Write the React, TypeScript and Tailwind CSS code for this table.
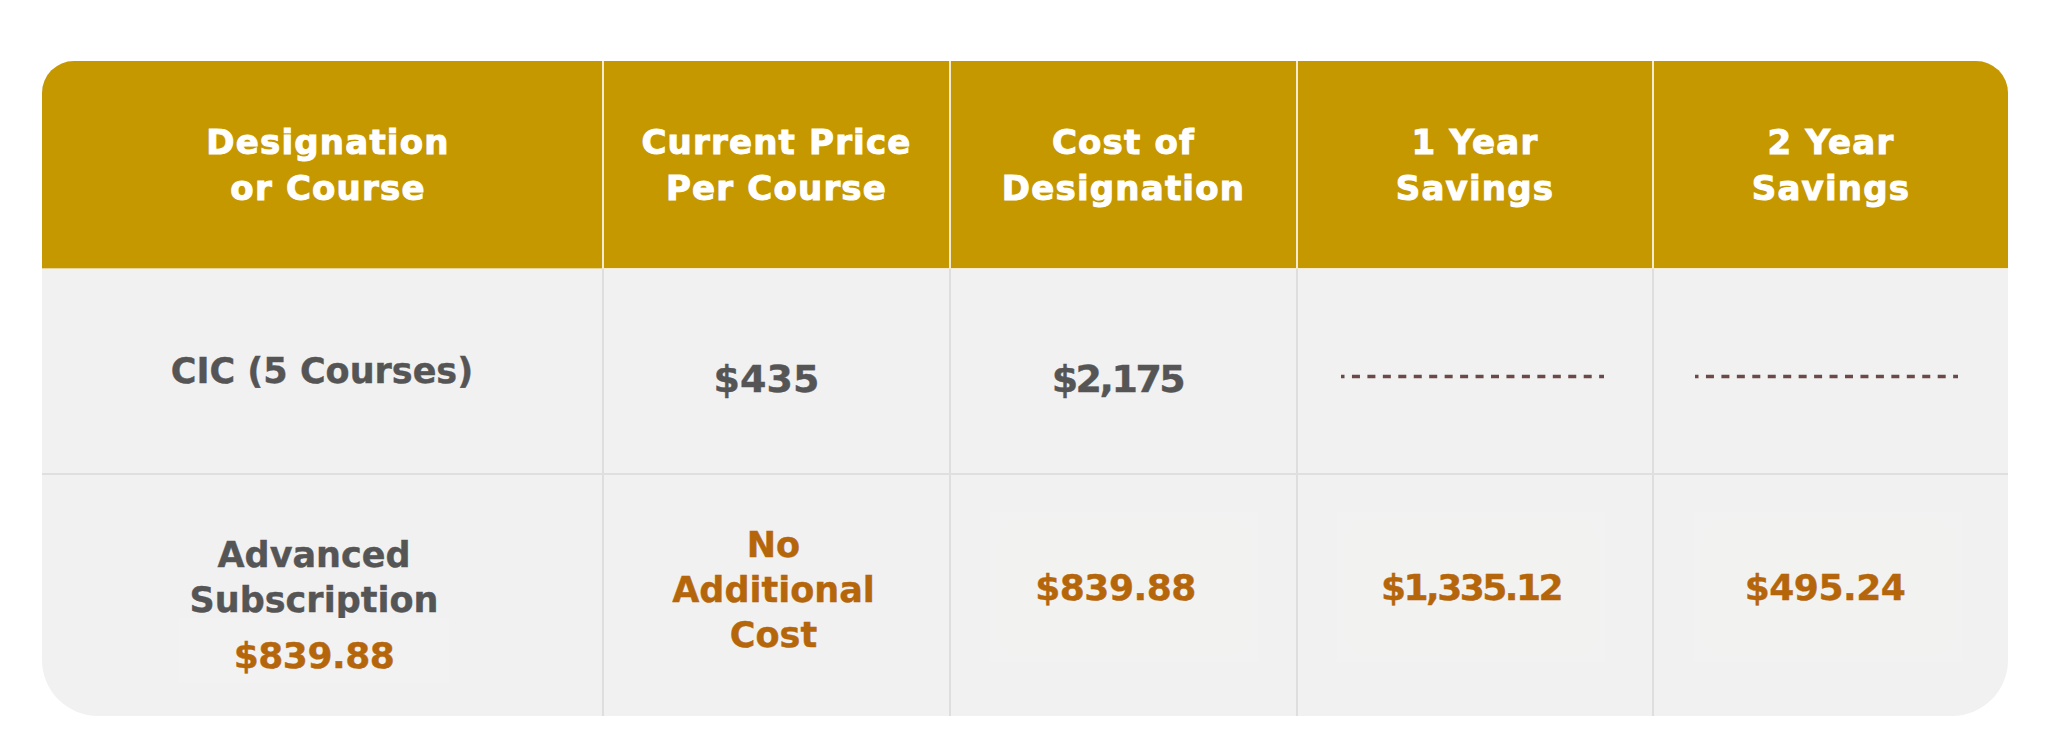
import React from "react";

const font = "font-['DejaVu_Sans',_'Liberation_Sans',sans-serif]";

function Dashes() {
  return (
    <svg width="263" height="5" viewBox="0 0 263 5" className="block">
      <line
        x1="0"
        y1="2.5"
        x2="263"
        y2="2.5"
        stroke="#6b4949"
        strokeWidth="3.6"
        strokeDasharray="8 7.45"
        strokeDashoffset="4.5"
      />
    </svg>
  );
}

function ValueBox({ children }: { children: React.ReactNode }) {
  return (
    <div className="w-[268px] h-[150px] bg-[#f2f2f2] p-[6px]">
      <div className="w-full h-full rounded-[28px] bg-[#f2f2f1] flex items-center justify-center text-[36px] leading-[45px] font-bold text-[#b5660b] tracking-[-0.5px] [-webkit-text-stroke:0.4px_#b5660b]">
        {children}
      </div>
    </div>
  );
}

export default function App() {
  const head =
    "bg-[#c69800] text-white text-[34px] leading-[46px] font-bold tracking-[1.2px] [-webkit-text-stroke:1px_white] flex items-center justify-center text-center border-b border-[#e6d49a]";
  const headDiv = "border-l-2 border-[#f4ead0]";
  const cell = "border-l-2 border-[#dedede]";
  const grey = "text-[#555556] [-webkit-text-stroke:0.4px_#555556]";
  return (
    <div className={`w-[2048px] min-h-[756px] bg-white pt-[61px] pl-[42px] ${font}`}>
      <div className="w-[1966px] h-[655px] rounded-tl-[32px] rounded-tr-[32px] rounded-bl-[56px] rounded-br-[56px] overflow-hidden bg-[#f1f1f1] grid grid-cols-[560px_347px_347px_356px_356px] grid-rows-[208px_206px_241px]">
        {/* Header */}
        <div className={`${head} pl-[12px]`}>
          <div>
            Designation
            <br />
            or Course
          </div>
        </div>
        <div className={`${head} ${headDiv}`}>
          <div>
            Current Price
            <br />
            Per Course
          </div>
        </div>
        <div className={`${head} ${headDiv}`}>
          <div>
            Cost of
            <br />
            Designation
          </div>
        </div>
        <div className={`${head} ${headDiv}`}>
          <div>
            1 Year
            <br />
            Savings
          </div>
        </div>
        <div className={`${head} ${headDiv}`}>
          <div>
            2 Year
            <br />
            Savings
          </div>
        </div>

        {/* Row 1 */}
        <div className={`border-b-2 border-[#dfdfdf] flex items-center justify-center text-[35px] leading-[45px] font-bold ${grey}`}>
          CIC (5 Courses)
        </div>
        <div className={`${cell} border-b-2 border-b-[#dfdfdf] flex items-center justify-center pt-[16px] pr-[20px] text-[38px] leading-[45px] font-bold ${grey}`}>
          $435
        </div>
        <div className={`${cell} border-b-2 border-b-[#dfdfdf] flex items-center justify-center pt-[16px] pr-[12px] text-[38px] leading-[45px] font-bold tracking-[-2.5px] ${grey}`}>
          $2,175
        </div>
        <div className={`${cell} border-b-2 border-b-[#dfdfdf] flex items-center justify-center pt-[10px] pr-[6px]`}>
          <Dashes />
        </div>
        <div className={`${cell} border-b-2 border-b-[#dfdfdf] flex items-center justify-center pt-[10px] pr-[10px]`}>
          <Dashes />
        </div>

        {/* Row 2 */}
        <div className="flex flex-col items-center pt-[58px] pr-[16px] text-[35px] leading-[45px] font-bold">
          <div className={grey}>Advanced</div>
          <div className={grey}>Subscription</div>
          <div className="mt-[-5px] w-[270px] h-[65px] bg-[#f2f2f2] flex justify-center pt-[15px]">
            <div className="text-[36px] leading-[45px] text-[#b5660b] tracking-[-0.5px] [-webkit-text-stroke:0.4px_#b5660b]">$839.88</div>
          </div>
        </div>
        <div className={`${cell} flex flex-col items-center pt-[48px] pr-[6px] text-[35px] leading-[45px] font-bold text-[#b5660b] [-webkit-text-stroke:0.4px_#b5660b] text-center`}>
          <div>No</div>
          <div>Additional</div>
          <div>Cost</div>
        </div>
        <div className={`${cell} flex justify-center pt-[37px]`}>
          <ValueBox>
            <span className="pr-[16px]">$839.88</span>
          </ValueBox>
        </div>
        <div className={`${cell} flex justify-center pt-[37px] pr-[8px]`}>
          <ValueBox>
            <span className="tracking-[-2.5px]">$1,335.12</span>
          </ValueBox>
        </div>
        <div className={`${cell} flex justify-center pt-[37px] pr-[6px]`}>
          <ValueBox>
            <span className="pr-[6px]">$495.24</span>
          </ValueBox>
        </div>
      </div>
    </div>
  );
}
